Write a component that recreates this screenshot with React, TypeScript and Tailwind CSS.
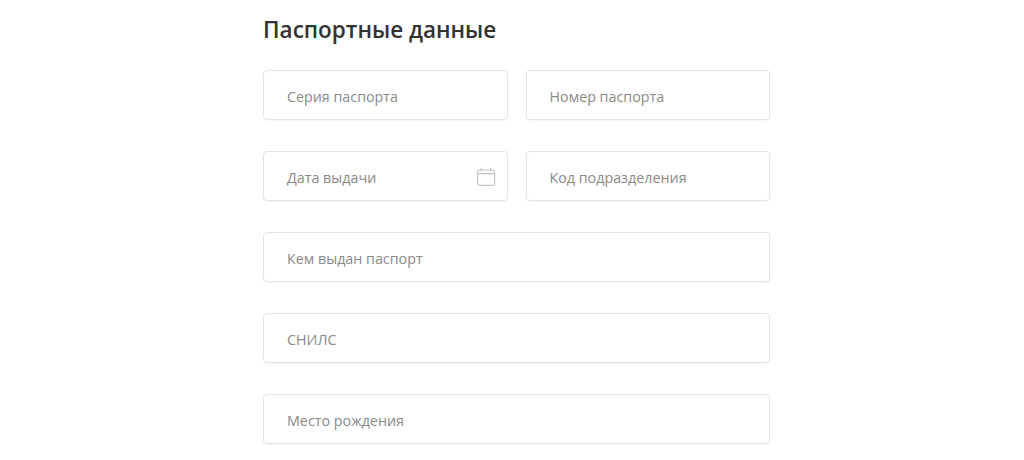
import React from "react";

function Field({ label, icon }: { label: string; icon?: boolean }) {
  return (
    <div className="relative flex h-[50px] min-w-0 flex-1 items-center rounded-[4px] border border-[#e3e3e3] bg-white pl-[23px] pt-[4px] text-[14.3px] text-[#8a8a86] shadow-[0_1px_1px_rgba(0,0,0,0.03)]">
      <span>{label}</span>
      {icon && (
        <svg className="absolute right-[11px] top-[15px]" width="20" height="20" viewBox="0 0 20 20" fill="none" stroke="#c4c4c2" strokeWidth="1.2">
          <rect x="1.6" y="3" width="17" height="15.4" rx="1.8" />
          <path d="M1.6 6.6H18.4M5.4 1V4M14.6 1V4" />
        </svg>
      )}
    </div>
  );
}

export default function App() {
  return (
    <div className="h-[460px] w-[1024px] overflow-hidden bg-white font-['Open_Sans','Noto_Sans',sans-serif]">
      <div className="ml-[263px] flex w-[507px] flex-col gap-[31px] pt-[14px]">
        <h1 className="h-[25px] text-[22.5px] font-semibold leading-[32px] text-[#333333]">Паспортные данные</h1>
        <div className="flex gap-[18px]">
          <Field label="Серия паспорта" />
          <Field label="Номер паспорта" />
        </div>
        <div className="flex gap-[18px]">
          <Field label="Дата выдачи" icon />
          <Field label="Код подразделения" />
        </div>
        <div className="flex">
          <Field label="Кем выдан паспорт" />
        </div>
        <div className="flex">
          <Field label="СНИЛС" />
        </div>
        <div className="flex">
          <Field label="Место рождения" />
        </div>
      </div>
    </div>
  );
}
